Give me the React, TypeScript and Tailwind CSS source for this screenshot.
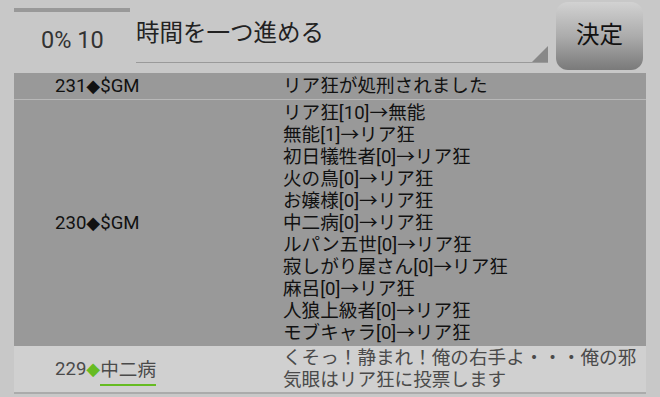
import React from 'react';

const FONT = { fontFamily: 'Roboto, "Noto Sans CJK JP", sans-serif' };

const voteLines = [
  'リア狂[10]→無能',
  '無能[1]→リア狂',
  '初日犠牲者[0]→リア狂',
  '火の鳥[0]→リア狂',
  'お嬢様[0]→リア狂',
  '中二病[0]→リア狂',
  'ルパン五世[0]→リア狂',
  '寂しがり屋さん[0]→リア狂',
  '麻呂[0]→リア狂',
  '人狼上級者[0]→リア狂',
  'モブキャラ[0]→リア狂',
];

const Diamond: React.FC<{ color?: string }> = ({ color = 'text-[#111111]' }) => (
  <span className={`${color} text-[18px]`} style={{ fontFamily: '"DejaVu Sans", sans-serif' }}>
    ◆
  </span>
);

const App: React.FC = () => (
  <div className="w-[660px] h-[397px] overflow-hidden bg-[#c8c8c8]" style={FONT}>
    {/* Header: progress, command input, submit */}
    <div className="flex h-[73px] pl-[14px]">
      <div className="w-[122px] flex flex-col">
        <div className="mt-[8px] h-[4px] w-[116px] bg-[#999999]" />
        <div className="mt-[14px] pl-[27px] text-[23.5px] leading-[28px] text-[#333333]">0% 10</div>
      </div>
      <div className="relative w-[412px] h-[63px] border-b border-[#9a9a9a]">
        <div className="pt-[18px] text-[23.5px] leading-[30px] text-[#222222]">時間を一つ進める</div>
        <div className="absolute right-0 bottom-0 w-0 h-0 border-l-[16px] border-l-transparent border-b-[16px] border-b-[#888888]" />
      </div>
      <button className="ml-[8px] mt-[2px] w-[87px] h-[68px] rounded-[12px] bg-gradient-to-b from-[#d2d2d2] via-[#acacac] to-[#7a7a7a] text-[23.5px] text-[#111111]">
        決定
      </button>
    </div>

    {/* Log table */}
    <div className="ml-[14px] w-[632px] text-[18.6px] leading-[22px]">
      <div className="grid grid-cols-[269px_1fr] bg-[#999999] border-b border-[#b8b8b8] text-[#111111]">
        <div className="pl-[41px] py-[2px] flex items-center">
          231<Diamond />$GM
        </div>
        <div className="py-[2px]">リア狂が処刑されました</div>
      </div>
      <div className="grid grid-cols-[269px_1fr] bg-[#999999] text-[#111111]">
        <div className="pl-[41px] flex items-center">
          230<Diamond />$GM
        </div>
        <div className="pt-[2px] pb-[2px]">
          {voteLines.map(line => (
            <div key={line}>{line}</div>
          ))}
        </div>
      </div>
      <div className="grid grid-cols-[269px_1fr] bg-[#d0d0d0] border-b-2 border-[#ababab] text-[#4a4a4a]">
        <div className="pl-[41px] flex items-center">
          229<Diamond color="text-[#66bb22]" />
          <span className="mt-[8px] pb-[4px] border-b-2 border-[#66bb22] leading-[20px]">中二病</span>
        </div>
        <div className="py-[1px] whitespace-nowrap">
          くそっ！静まれ！俺の右手よ・・・俺の邪
          <br />
          気眼はリア狂に投票します
        </div>
      </div>
    </div>
  </div>
);

export default App;
